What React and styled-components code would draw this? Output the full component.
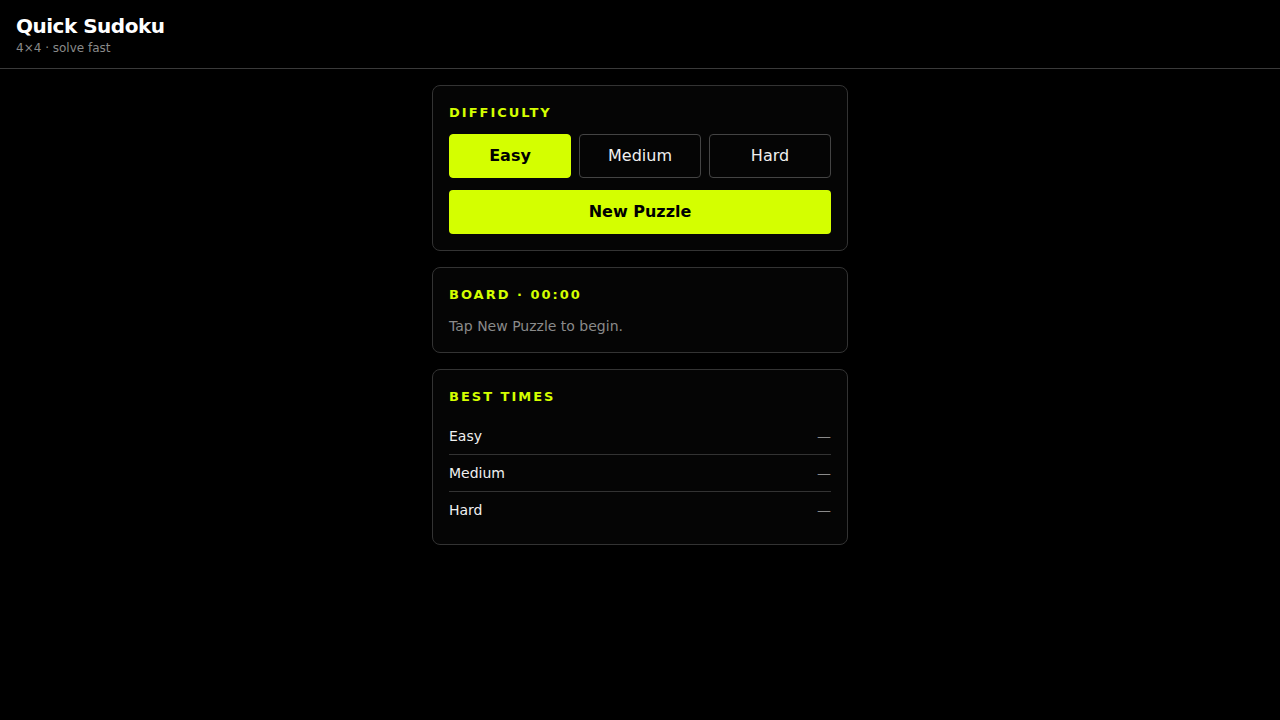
import React, { useState } from "react";
import styled, { createGlobalStyle } from "styled-components";

const GlobalStyle = createGlobalStyle`
	html, body {
		margin: 0;
		background: #000;
		color: #fff;
		font-family: "DejaVu Sans", sans-serif;
	}
	* { box-sizing: border-box; }
`;

const ACCENT = "#d4ff00";

const Page = styled.div`
	min-height: 100vh;
	background: #000;
`;

const Header = styled.header`
	padding: 12px 16px;
	border-bottom: 1px solid #3a3a3a;
`;

const Title = styled.h1`
	margin: 0;
	font-size: 20px;
	line-height: 28px;
	font-weight: 700;
	letter-spacing: -0.5px;
	color: #fff;
`;

const Subtitle = styled.div`
	margin-top: 1px;
	font-size: 12px;
	line-height: 15px;
	color: #8a8a8a;
`;

const Main = styled.main`
	width: 416px;
	margin: 0 auto;
	padding-top: 16px;
	display: flex;
	flex-direction: column;
	gap: 16px;
`;

const Card = styled.section`
	border: 1px solid #333;
	border-radius: 8px;
	background: #050505;
	padding: 16px;
`;

const Label = styled.h2`
	margin: 0 0 11px;
	padding-top: 1px;
	font-size: 13px;
	line-height: 20px;
	font-weight: 700;
	letter-spacing: 2px;
	text-transform: uppercase;
	color: ${ACCENT};
`;

const ButtonRow = styled.div`
	display: grid;
	grid-template-columns: repeat(3, 1fr);
	gap: 8px;
`;

const Choice = styled.button`
	height: 44px;
	padding: 0 0 2px;
	border-radius: 4px;
	font-family: inherit;
	font-size: 16px;
	cursor: pointer;
	border: 1px solid ${(p) => (p.$active ? ACCENT : "#444")};
	background: ${(p) => (p.$active ? ACCENT : "transparent")};
	color: ${(p) => (p.$active ? "#000" : "#f0f0f0")};
	font-weight: ${(p) => (p.$active ? 700 : 400)};
`;

const Primary = styled.button`
	width: 100%;
	height: 44px;
	margin-top: 12px;
	padding: 0 0 2px;
	border: none;
	border-radius: 4px;
	background: ${ACCENT};
	color: #000;
	font-family: inherit;
	font-size: 16px;
	font-weight: 700;
	cursor: pointer;
`;

const Hint = styled.p`
	margin: 0;
	font-size: 14px;
	line-height: 20px;
	color: #8a8a8a;
`;

const TimeRow = styled.div`
	display: flex;
	justify-content: space-between;
	align-items: center;
	padding: 8px 0;
	font-size: 14px;
	line-height: 20px;
	color: #f0f0f0;
	border-bottom: 1px solid #333;
	&:last-child {
		border-bottom: none;
	}
`;

const Dash = styled.span`
	color: #8a8a8a;
`;

const levels = ["Easy", "Medium", "Hard"];

function App() {
	const [level, setLevel] = useState("Easy");
	return (
		<>
			<GlobalStyle />
			<Page>
				<Header>
					<Title>Quick Sudoku</Title>
					<Subtitle>4×4 · solve fast</Subtitle>
				</Header>
				<Main>
					<Card>
						<Label>Difficulty</Label>
						<ButtonRow>
							{levels.map((l) => (
								<Choice key={l} $active={l === level} onClick={() => setLevel(l)}>
									{l}
								</Choice>
							))}
						</ButtonRow>
						<Primary>New Puzzle</Primary>
					</Card>
					<Card>
						<Label>Board · 00:00</Label>
						<Hint>Tap New Puzzle to begin.</Hint>
					</Card>
					<Card>
						<Label>Best Times</Label>
						<div>
							{levels.map((l) => (
								<TimeRow key={l}>
									<span>{l}</span>
									<Dash>—</Dash>
								</TimeRow>
							))}
						</div>
					</Card>
				</Main>
			</Page>
		</>
	);
}

export default App;
